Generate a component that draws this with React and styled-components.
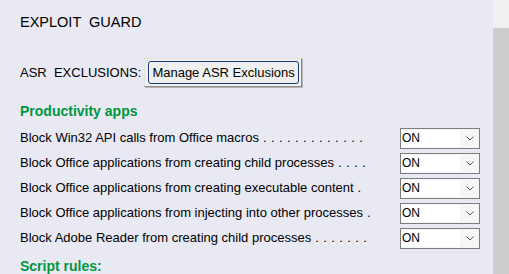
import React from "react";
import styled, { createGlobalStyle } from "styled-components";

const GlobalStyle = createGlobalStyle`
  html, body {
    margin: 0;
    padding: 0;
    background: #e9e9f3;
  }
  body {
    font-family: "Liberation Sans", Arial, sans-serif;
    color: #000;
  }
`;

const Frame = styled.div`
  display: flex;
  width: 509px;
  height: 274px;
  overflow: hidden;
  background: #e9e9f3;
`;

const Content = styled.div`
  flex: 1;
  padding: 14px 0 0 20px;
  display: flex;
  flex-direction: column;
  align-items: flex-start;
`;

const Title = styled.div`
  font-size: 14.5px;
  line-height: 16px;
  white-space: pre;
`;

const Rule = styled.div`
  width: 435px;
  height: 1px;
  background: #000;
  margin-top: 12px;
`;

const ExclusionRow = styled.div`
  display: flex;
  align-items: center;
  gap: 3px;
  margin-top: 16px;
  font-size: 13px;
  line-height: 15px;
`;

const FieldLabel = styled.span`
  white-space: pre;
`;

const ClassicButton = styled.button`
  box-sizing: border-box;
  height: 29px;
  padding: 2px 2px 2px 3px;
  border: 1px solid;
  border-color: #e2e2e2 #8c8c8c #8c8c8c #e2e2e2;
  box-shadow: 1px 1px 0 #b4b4b4;
  background: #f0f0f0;
  font-family: "Liberation Sans", Arial, sans-serif;
  font-size: 13px;
  color: #000;
  cursor: default;
  display: flex;
`;

const FocusFrame = styled.span`
  display: block;
  box-sizing: border-box;
  height: 23px;
  line-height: 21px;
  padding: 0 3px;
  border: 1px solid #1b3a78;
  border-radius: 3px;
  white-space: nowrap;
`;

const SectionHeading = styled.div`
  font-size: 14px;
  font-weight: bold;
  line-height: 16px;
  color: #00963f;
  margin-top: ${(p) => p.$top}px;
`;

const RuleList = styled.div`
  display: flex;
  flex-direction: column;
  margin-top: 7px;
`;

const RuleRow = styled.div`
  display: flex;
  align-items: center;
  height: 25px;
`;

const RuleLabel = styled.div`
  flex: 0 0 380px;
  font-size: 13px;
  line-height: 15px;
  padding-bottom: 3px;
  white-space: pre;
`;

const Dots = styled.span`
  letter-spacing: 0.4px;
`;

const Select = styled.div`
  box-sizing: border-box;
  width: 80px;
  height: 21px;
  border: 1px solid #7d7d7d;
  background: #f6f6f6;
  display: flex;
  align-items: stretch;
`;

const SelectValue = styled.div`
  width: 59px;
  margin: 1px 0;
  background: #fff;
  font-size: 12px;
  line-height: 17px;
  padding-left: 1px;
  box-sizing: border-box;
`;

const SelectArrow = styled.div`
  flex: 1;
  display: flex;
  align-items: center;
  justify-content: center;
`;

const Scrollbar = styled.div`
  width: 16px;
  background: #f0f0f0;
  display: flex;
  flex-direction: column;
`;

const Thumb = styled.div`
  flex: 1;
  margin-top: 28px;
  background: #cdcdcd;
`;

const Chevron = () => (
  <svg width="8" height="5" viewBox="0 0 8 5">
    <polyline
      points="0.5,0.5 4,4 7.5,0.5"
      fill="none"
      stroke="#5a5a5a"
      strokeWidth="1"
    />
  </svg>
);

const rules = [
  { text: "Block Win32 API calls from Office macros", dots: 13 },
  { text: "Block Office applications from creating child processes", dots: 4 },
  { text: "Block Office applications from creating executable content", dots: 1 },
  { text: "Block Office applications from injecting into other processes", dots: 1 },
  { text: "Block Adobe Reader from creating child processes", dots: 7 },
];

export default function App() {
  return (
    <>
      <GlobalStyle />
      <Frame>
        <Content>
          <Title>{"EXPLOIT  GUARD"}</Title>
          <Rule />
          <ExclusionRow>
            <FieldLabel>{"ASR  EXCLUSIONS:"}</FieldLabel>
            <ClassicButton>
              <FocusFrame>Manage ASR Exclusions</FocusFrame>
            </ClassicButton>
          </ExclusionRow>
          <SectionHeading $top={16}>Productivity apps</SectionHeading>
          <RuleList>
            {rules.map((r) => (
              <RuleRow key={r.text}>
                <RuleLabel>
                  {r.text}
                  <Dots>{" .".repeat(r.dots)}</Dots>
                </RuleLabel>
                <Select>
                  <SelectValue>ON</SelectValue>
                  <SelectArrow>
                    <Chevron />
                  </SelectArrow>
                </Select>
              </RuleRow>
            ))}
          </RuleList>
          <SectionHeading $top={7}>Script rules:</SectionHeading>
        </Content>
        <Scrollbar>
          <Thumb />
        </Scrollbar>
      </Frame>
    </>
  );
}
